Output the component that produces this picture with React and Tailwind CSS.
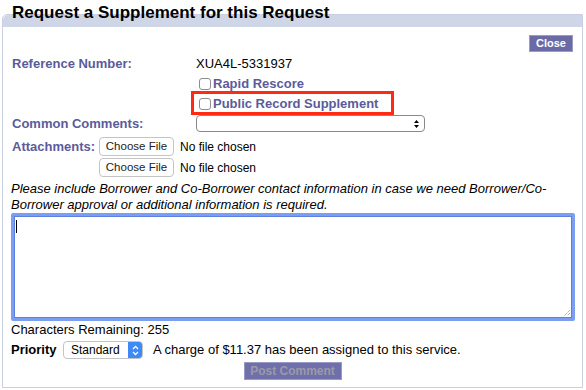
import React from 'react';

const Checkbox = () => (
    <span className="inline-block w-[12px] h-[12px] border border-[#8e8e8e] rounded-[3px] bg-white shrink-0" />
);

const FileInput = () => (
    <div className="flex items-center gap-[6px] h-[21px]">
        <span className="h-[19px] w-[75px] flex items-center justify-center border border-[#c4c4c4] rounded-[4px] bg-white text-[11.5px] text-[#222]">Choose File</span>
        <span className="text-[12px] text-black">No file chosen</span>
    </div>
);

const UpDown = ({ className }) => (
    <svg width="7" height="10" viewBox="0 0 7 10" className={className}>
        <path d="M1 4 L3.5 1 L6 4 Z M1 6 L3.5 9 L6 6 Z" fill="currentColor" />
    </svg>
);

export default function App() {
    return (
        <div className="w-[586px] h-[390px] bg-white font-['Liberation_Sans',Arial,sans-serif] text-[13px] text-black pt-[14px] pl-[2px]">
            <div className="relative w-[581px] h-[374px] border border-[#c9d0e2] rounded-tl-[5px]">
                {/* header bar with title */}
                <div className="h-[12px] bg-[#ced6e7] rounded-tl-[5px]" />
                <h1 className="absolute left-[9px] top-[-13px] text-[17px] leading-[22px] font-bold text-black">Request a Supplement for this Request</h1>

                <div className="flex justify-end pr-[9px] pt-[8px]">
                    <button className="h-[17px] px-[6px] bg-[#6a6aa7] border border-[#9a9ac4] text-white text-[11px] font-bold leading-none">Close</button>
                </div>

                <div className="pl-[9px] pr-[8px] pt-[4px]">
                    <div className="grid grid-cols-[184px_1fr] items-center">
                        <div className="h-[16px] flex items-center font-bold text-[#5b5b9a]">Reference Number:</div>
                        <div className="h-[16px] flex items-center">XUA4L-5331937</div>

                        <div />
                        <div className="relative flex flex-col pl-[3px] pt-[2px]">
                            <label className="h-[20px] flex items-center gap-[2px] font-bold text-[#5b5b9a]">
                                <Checkbox />Rapid Rescore
                            </label>
                            <label className="h-[20px] flex items-center gap-[2px] font-bold text-[#5b5b9a]">
                                <Checkbox />Public Record Supplement
                            </label>
                            {/* annotation highlight */}
                            <div className="absolute left-[-5px] top-[19px] w-[203px] h-[24px] border-[3px] border-[#ff2a14]" />
                        </div>

                        <div className="h-[19px] flex items-center font-bold text-[#5b5b9a]">Common Comments:</div>
                        <div className="h-[19px] flex items-center">
                            <div className="w-[229px] h-[17px] border border-[#8a8a8a] rounded-[4px] bg-white flex items-center justify-end pr-[4px] text-black">
                                <UpDown />
                            </div>
                        </div>
                    </div>

                    <div className="flex items-start mt-[3px]">
                        <div className="w-[87px] h-[21px] flex items-center font-bold text-[#5b5b9a]">Attachments:</div>
                        <div className="flex flex-col">
                            <FileInput />
                            <FileInput />
                        </div>
                    </div>

                    <p className="mt-[3px] italic leading-[16px] ml-[-1px] w-[566px]">
                        Please include Borrower and Co-Borrower contact information in case we need Borrower/Co-Borrower approval or additional information is required.
                    </p>

                    <div className="relative ml-[-1px] w-[564px] h-[108px] border-[3px] border-[#7b9ef3] rounded-[2px] bg-white shadow-[inset_0_0_0_1px_#5b80e0]">
                        <div className="absolute left-[2px] top-[4px] w-px h-[13px] bg-black" />
                        <svg width="8" height="8" viewBox="0 0 8 8" className="absolute right-[1px] bottom-[1px]">
                            <path d="M7 1 L1 7 M7 4 L4 7" stroke="#8a8a8a" strokeWidth="1" strokeDasharray="1 1" />
                        </svg>
                    </div>

                    <div className="mt-[1px] ml-[-1px] h-[16px] flex items-center">Characters Remaining: 255</div>

                    <div className="mt-[2px] ml-[-1px] h-[20px] flex items-center">
                        <span className="font-bold w-[52px]">Priority</span>
                        <div className="w-[80px] h-[18px] flex items-stretch border border-[#c4c4c4] rounded-[4px] bg-white overflow-hidden">
                            <span className="flex-1 flex items-center pl-[7px] text-[12px]">Standard</span>
                            <span className="w-[14px] bg-[#3d8af7] flex items-center justify-center text-white">
                                <svg width="7" height="11" viewBox="0 0 7 11">
                                    <path d="M1 4 L3.5 1.5 L6 4 M1 7 L3.5 9.5 L6 7" stroke="white" strokeWidth="1.3" fill="none" />
                                </svg>
                            </span>
                        </div>
                        <span className="ml-[10px]">A charge of $11.37 has been assigned to this service.</span>
                    </div>

                    <div className="flex justify-center mt-[2px] pr-[1px]">
                        <button className="w-[98px] h-[18px] bg-[#6f6fab] border border-[#9a9ac4] text-[#9a9aa6] text-[12px] font-bold leading-none">Post Comment</button>
                    </div>
                </div>
            </div>
        </div>
    );
}
